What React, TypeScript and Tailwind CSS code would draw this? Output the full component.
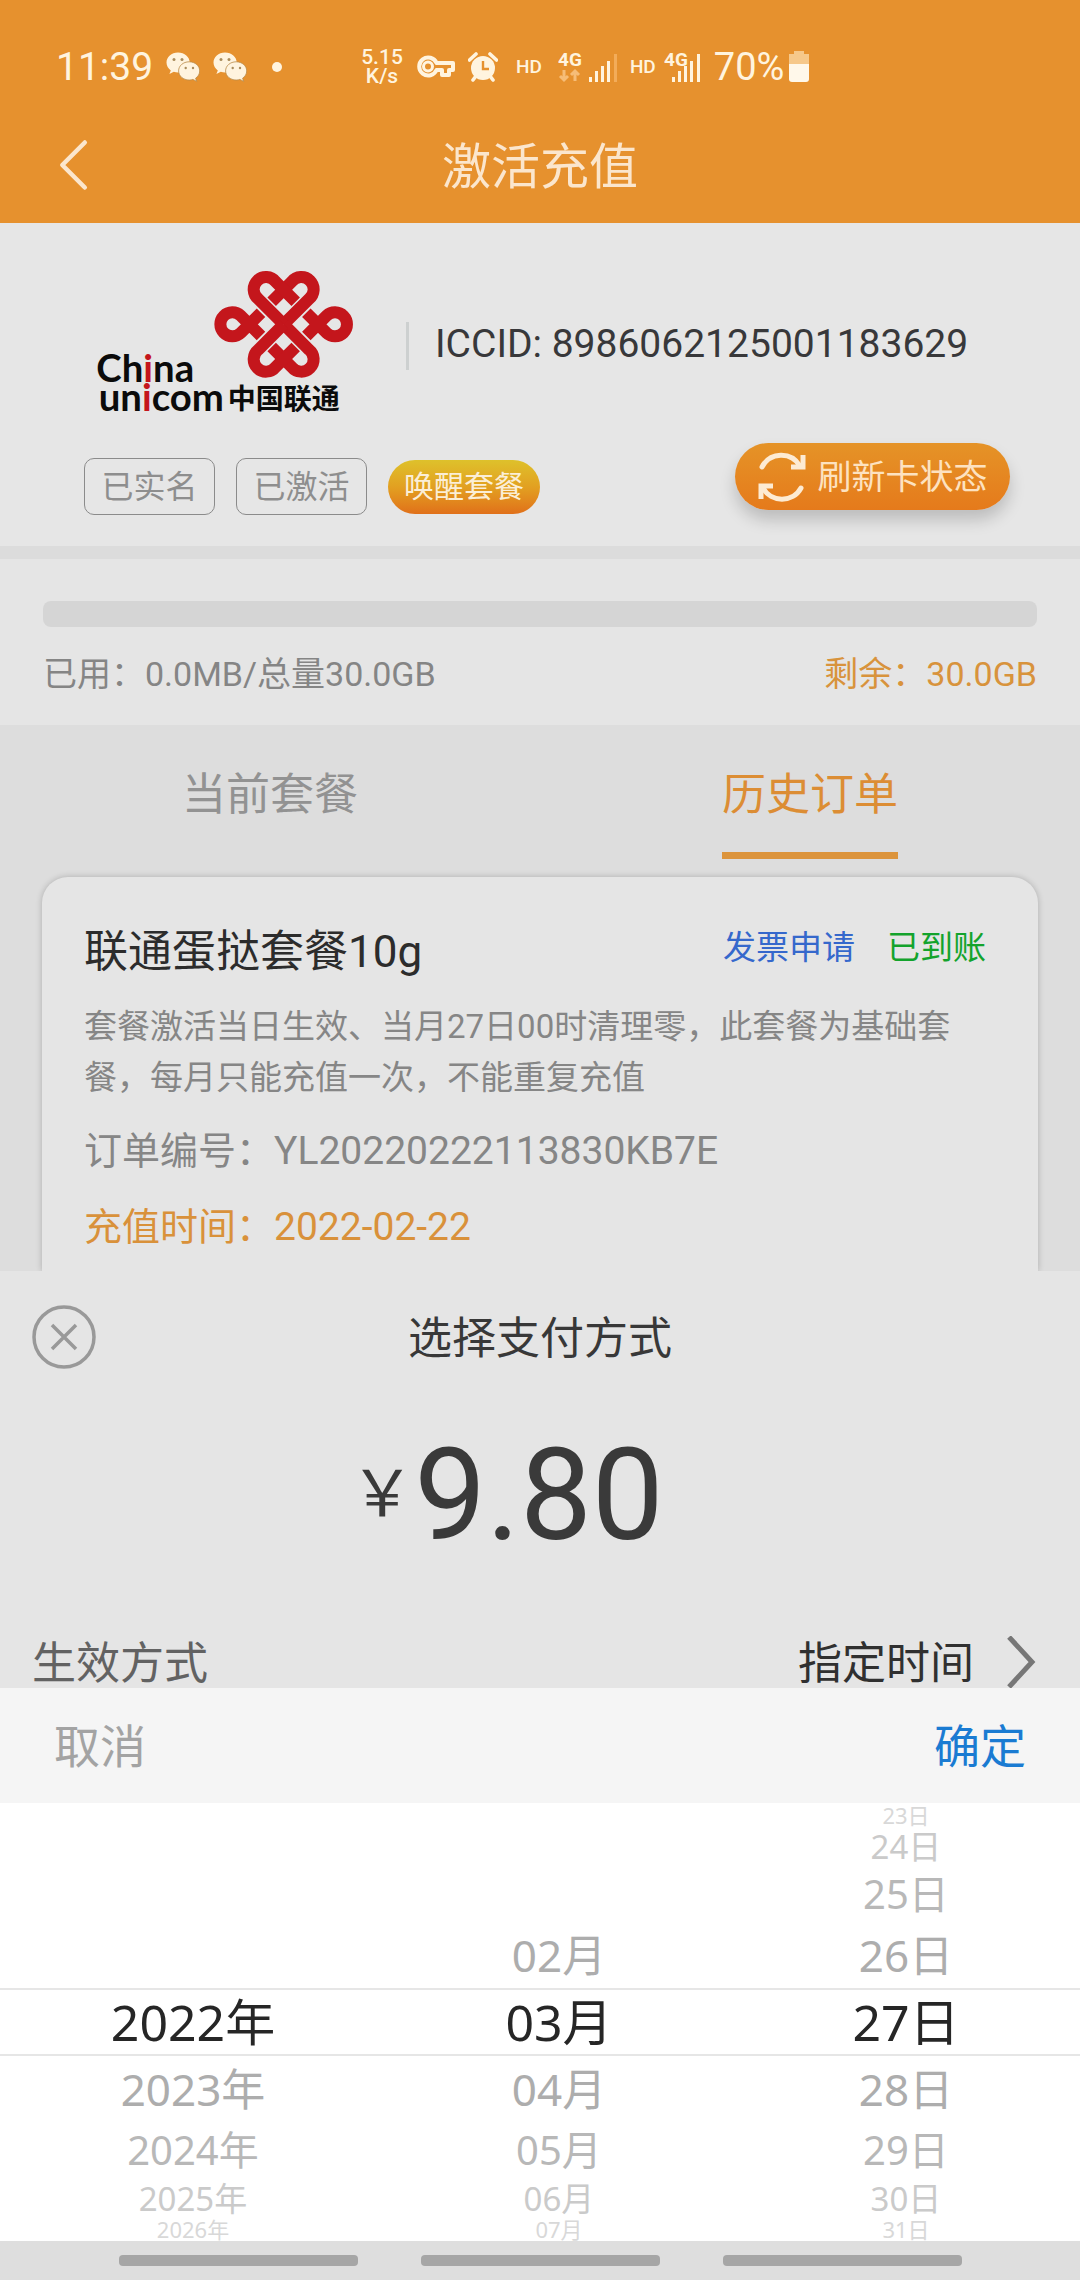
import React from "react";

const sans = "font-['Roboto','Noto_Sans_CJK_SC',sans-serif]";
const wheelFont = "font-['Noto_Sans','Noto_Sans_CJK_SC',sans-serif]";

function WeChat() {
  return (
    <svg viewBox="0 0 34 30" className="h-[30px] w-[34px]" aria-hidden="true">
      <path
        fill="#fff4df"
        d="M12 0.5C5.4 0.5 0.5 5 0.5 10.6c0 3.3 1.7 6 4.3 7.9L3.4 22l4.4-2.2c1.4.4 2.8.6 4.2.6 6.600 0 11.700-4.400 11.700-9.900S18.600 0.500 12 0.500Z"
      />
      <circle cx="8" cy="7.500" r="1.500" fill="#a98c5c" />
      <circle cx="16" cy="7.500" r="1.500" fill="#a98c5c" />
      <path
        fill="#fff4df"
        stroke="#b98a48"
        strokeWidth="0.8"
        d="M23.200 9.800c-6 0-10.600 4-10.600 9.100s4.600 9.100 10.600 9.100c1.300 0 2.600-.2 3.700-.6l3.800 2-1.100-3.200c2.600-1.700 4.100-4.300 4.100-7.300 0-5.100-4.700-9.100-10.500-9.100Z"
      />
      <circle cx="19.700" cy="16" r="1.200" fill="#a98c5c" />
      <circle cx="27" cy="16" r="1.200" fill="#a98c5c" />
    </svg>
  );
}

function KeyIcon() {
  return (
    <svg viewBox="0 0 40 24" className="h-6 w-10" aria-hidden="true">
      <path
        d="M20.500 8H37v7h-4v5h-7v-5h-5.500A9 9 0 1 1 20.500 8Z"
        fill="none"
        stroke="#fff4df"
        strokeWidth="4"
        strokeLinejoin="round"
      />
      <circle cx="12" cy="11.500" r="4.500" fill="none" stroke="#fff4df" strokeWidth="3" />
    </svg>
  );
}

function AlarmIcon() {
  return (
    <svg viewBox="0 0 30 30" className="size-[30px]" aria-hidden="true">
      <circle cx="15" cy="16" r="12" fill="#fff4df" />
      <path d="M1.500 8 8 2M28.500 8 22 2M5 28l3-4M25 28l-3-4" stroke="#fff4df" strokeWidth="3.600" strokeLinecap="round" />
      <path d="M15 9v8h6" fill="none" stroke="#e6912e" strokeWidth="2.400" />
    </svg>
  );
}

function Signal({ weak }: { weak?: boolean }) {
  const dx = weak ? 31 : 8;
  return (
    <svg
      viewBox={weak ? "0 -6 60 44" : "0 -6 38 44"}
      className={weak ? "h-11 w-[60px]" : "h-11 w-[38px]"}
      aria-hidden="true"
    >
      <text x="0" y="15" fontSize="19" fontWeight="700" fontFamily="Roboto, sans-serif" fill="#fff4df">
        4G
      </text>
      {weak && (
        <path d="M6 19v10M2 25l4 4 4-4M17 30V20M13 24l4-4 4 4" fill="none" stroke="#f6bd78" strokeWidth="3" />
      )}
      <g fill="#fff4df">
        <rect x={dx} y="26" width="3" height="5" />
        <rect x={dx + 6} y="20" width="3" height="11" />
        <rect x={dx + 12} y="15" width="3" height="16" />
        <rect x={dx + 18} y="10" width="3" height="21" />
        <rect x={dx + 25} y="3" width="3" height="28" fill={weak ? "#f3ac59" : "#fff4df"} />
      </g>
    </svg>
  );
}

function StatusBar() {
  return (
    <div className="flex h-[130px] items-center pt-1 pl-14 text-[#fff4df]">
      <span className="w-[110px] text-[39px] leading-none">11:39</span>
      <div className="flex items-center gap-[13px]">
        <WeChat />
        <WeChat />
        <span className="ml-3 size-[10px] rounded-full bg-[#fff4df]" />
      </div>
      <div className="ml-[78px] w-11 text-center text-[21px] leading-[19px] font-medium">
        5.15
        <br />
        K/s
      </div>
      <div className="ml-3 flex items-center gap-3">
        <KeyIcon />
        <AlarmIcon />
      </div>
      <span className="ml-[18px] text-[19px] font-medium">HD</span>
      <div className="ml-4 flex items-center gap-3">
        <Signal weak />
        <span className="text-[19px] font-medium">HD</span>
      </div>
      <div className="ml-2 flex items-center">
        <Signal />
      </div>
      <span className="ml-3 text-[38px] leading-none">70%</span>
      <svg viewBox="0 0 22 32" className="ml-1 h-8 w-[22px]" aria-hidden="true">
        <path d="M6 0h10v3h5v10H1V3h5Z" fill="#f6c88a" />
        <path d="M1 13h20v15a3 3 0 0 1-3 3H4a3 3 0 0 1-3-3Z" fill="#fff8ea" />
      </svg>
    </div>
  );
}

function UnicomLogo() {
  const lobe = "M733 280 809 204A37 37 0 1 0 757 152L697 212";
  const side = "M801 245 862 306A36 36 0 1 0 862 254L801 315";
  return (
    <svg viewBox="170 120 774 450" className="h-[150px] w-[258px]" role="img" aria-label="China unicom 中国联通">
      <g fill="none" stroke="#c4161c" strokeWidth="36">
        <path d={lobe} />
        <path d={lobe} transform="translate(1466 0) scale(-1 1)" />
        <path d={lobe} transform="translate(0 560) scale(1 -1)" />
        <path d={lobe} transform="translate(1466 560) scale(-1 -1)" />
        <path d={side} />
        <path d={side} transform="translate(1466 0) scale(-1 1)" />
      </g>
      <g fontFamily="Lato, sans-serif" fontWeight="700" fontSize="115" fill="#0b0b0b">
        <text x="171" y="452">
          Ch<tspan fill="#c4161c">i</tspan>na
        </text>
        <text x="178" y="540">
          un<tspan fill="#c4161c">i</tspan>com
        </text>
      </g>
      <text x="565" y="534" fontFamily="'Noto Sans CJK SC', sans-serif" fontWeight="700" fontSize="84" fill="#0b0b0b">
        中国联通
      </text>
    </svg>
  );
}

function CardInfo() {
  return (
    <section className="border-b-[13px] border-[#dcdcdc] bg-[#e6e6e6] pt-12 pr-[70px] pb-[31px] pl-[84px]">
      <div className="flex items-center pl-3">
        <UnicomLogo />
        <span className="ml-[52px] h-12 w-[3px] bg-[#cdd0d0]" />
        <p className="mb-1 ml-[26px] text-[39px] leading-none whitespace-nowrap text-[#38383a]">ICCID: 8986062125001183629</p>
      </div>
      <div className="mt-[22px] flex items-start justify-between">
        <div className="mt-[15px] flex items-center gap-[21px] leading-none">
          <span className="flex h-[57px] w-[131px] items-center justify-center rounded-[10px] border border-[#8b8b8b] text-[32px] text-[#8e8e8e]">
            已实名
          </span>
          <span className="flex h-[57px] w-[131px] items-center justify-center rounded-[10px] border border-[#8b8b8b] text-[32px] text-[#8e8e8e]">
            已激活
          </span>
          <button className="flex h-[54px] w-[152px] items-center justify-center rounded-full bg-linear-to-b from-[#dec12b] via-[#e2a021] to-[#e0701a] text-[30px] text-[#fbeed6]">
            唤醒套餐
          </button>
        </div>
        <button className="flex h-[67px] w-[275px] items-center justify-center gap-3 rounded-full bg-linear-to-b from-[#e59327] to-[#e57a1b] text-[34px] leading-none text-[#fde2c0] shadow-[0_10px_16px_rgba(0,0,0,0.18)]">
          <svg viewBox="0 0 48 50" className="h-[50px] w-12" fill="none" stroke="#fdebd3" strokeWidth="5" aria-hidden="true">
            <path d="M4 15C12 0 33 -1 42 14" strokeLinecap="round" />
            <path d="M45 3v12H33" />
            <path d="M43 36C35 51 13 51 5 36" strokeLinecap="round" />
            <path d="M3 47V34h12" />
          </svg>
          刷新卡状态
        </button>
      </div>
    </section>
  );
}

function Usage() {
  return (
    <section className="bg-[#e5e5e5] px-[43px] pt-[42px] pb-[26px]">
      <div role="progressbar" aria-label="流量" aria-valuenow={0} className="h-[26px] rounded-lg bg-[#d5d5d5]" />
      <div className="mt-[22px] flex justify-between text-[34px] leading-[50px]">
        <span className="text-[#858585]">已用：0.0MB/总量30.0GB</span>
        <span className="text-[#d8933c]">剩余：30.0GB</span>
      </div>
    </section>
  );
}

function Tabs() {
  return (
    <div role="tablist" className="grid grid-cols-2 items-start justify-items-center pt-10 text-[44px] leading-[60px]">
      <button role="tab" aria-selected="false" className="pb-[27px] text-[#929292]">
        当前套餐
      </button>
      <button role="tab" aria-selected="true" className="border-b-[7px] border-[#dc943c] pb-[27px] text-[#dc8d34]">
        历史订单
      </button>
    </div>
  );
}

function Order() {
  return (
    <article className="mx-[42px] mt-[18px] rounded-t-[26px] bg-[#e5e5e5] pt-[42px] pr-[52px] pb-4 pl-[42px] shadow-[0_0_6px_rgba(0,0,0,0.22)]">
      <div className="flex items-center justify-between leading-[66px]">
        <h2 className="text-[44px] text-[#2c2c2c]">联通蛋挞套餐10g</h2>
        <div className="flex gap-8 pb-2 text-[33px] leading-[58px]">
          <a href="#invoice" className="text-[#3568cc]">
            发票申请
          </a>
          <span className="text-[#13a32c]">已到账</span>
        </div>
      </div>
      <p className="mt-4 text-[33px] leading-[51px] text-[#868686]">
        套餐激活当日生效、当月27日00时清理零，此套餐为基础套餐，每月只能充值一次，不能重复充值
      </p>
      <p className="mt-5 text-[38px] leading-[56px] text-[#868686]">
        订单编号：<span className="text-[39px]">YL20220222113830KB7E</span>
      </p>
      <p className="mt-5 text-[38px] leading-[56px] text-[#d9913a]">
        充值时间：<span className="text-[39px]">2022-02-22</span>
      </p>
    </article>
  );
}

function PaySheet() {
  return (
    <section className="relative bg-[#e5e5e5] pr-11 pl-8">
      <div className="grid grid-cols-[64px_1fr_64px] items-center pt-8">
        <button aria-label="关闭">
          <svg viewBox="0 0 64 64" className="size-16" fill="none" stroke="#999" strokeWidth="3.500">
            <circle cx="32" cy="32" r="30" />
            <path d="M20 20 44 44M44 20 20 44" />
          </svg>
        </button>
        <h2 className="pt-1 pl-3 text-center text-[44px] leading-[64px] text-[#383838]">选择支付方式</h2>
      </div>
      <div className="mt-14 flex items-start justify-center pr-[54px] text-[#3a3a3a]">
        <span className="mt-8 text-[64px] leading-[72px]">￥</span>
        <span className="text-[128px] leading-[136px]">9.80</span>
      </div>
      <div className="mt-[73px] flex items-end text-[44px] leading-[48px]">
        <span className="flex-1 text-[#626262]">生效方式</span>
        <button className="flex items-end gap-8 text-[#303030]">
          指定时间
          <svg viewBox="0 0 30 52" className="h-[52px] w-[30px]" fill="none" stroke="#777" strokeWidth="5" aria-hidden="true">
            <path d="M3 1 26 26 3 51" />
          </svg>
        </button>
      </div>
    </section>
  );
}

const rowStyle = [
  "h-[68px] text-[50px] text-[#262626]",
  "h-[66px] text-[44px] text-[#adadad]",
  "h-14 text-[40px] text-[#b8b8b8]",
  "h-10 text-[33px] text-[#cacaca]",
  "h-[22px] text-[22px] text-[#d8d8d8]",
];

const wheels = [
  ["", "", "", "", "2022年", "2023年", "2024年", "2025年", "2026年"],
  ["", "", "", "02月", "03月", "04月", "05月", "06月", "07月"],
  ["23日", "24日", "25日", "26日", "27日", "28日", "29日", "30日", "31日"],
];

function DatePicker() {
  return (
    <section>
      <div className="flex h-[115px] items-center justify-between bg-[#f5f5f5] px-[54px] pt-1 text-[46px]">
        <button className="text-[#a3a3a3]">取消</button>
        <button className="text-[#1a7bd2]">确定</button>
      </div>
      <div className={`grid grid-cols-[386fr_346fr_348fr] bg-white py-px ${wheelFont}`}>
        {wheels.map((items, c) => (
          <ul key={c} role="listbox" aria-label={["年", "月", "日"][c]}>
            {items.map((item, i) => (
              <li
                key={i}
                role="option"
                aria-selected={i === 4}
                className={`flex items-center justify-center leading-none ${rowStyle[Math.abs(i - 4)]} ${
                  i === 4 ? "border-y-2 border-[#e6e6e6]" : ""
                }`}
              >
                {item}
              </li>
            ))}
          </ul>
        ))}
      </div>
    </section>
  );
}

export default function App() {
  return (
    <div className={`flex min-h-screen flex-col bg-[#dddddd] ${sans}`}>
      <header className="bg-[#e6912e]">
        <StatusBar />
        <div className="grid h-[93px] grid-cols-[96px_1fr_96px] items-start">
          <button aria-label="返回" className="justify-self-end pr-1">
            <svg viewBox="0 0 36 60" className="h-[62px] w-9 pt-2" fill="none" stroke="#fbe6cd" strokeWidth="5" strokeLinecap="round" strokeLinejoin="round">
              <path d="M30 5 5 30 30 55" />
            </svg>
          </button>
          <h1 className="text-center text-[49px] leading-[76px] text-[#fbe6cd]">激活充值</h1>
        </div>
      </header>
      <main>
        <CardInfo />
        <Usage />
        <Tabs />
        <Order />
      </main>
      <PaySheet />
      <DatePicker />
      <nav className="flex flex-1 items-start justify-center gap-[63px] bg-[#dedede] pt-[14px]">
        <button aria-label="最近任务" className="h-[11px] w-[239px] rounded bg-[#a6a6a6]" />
        <button aria-label="主页" className="h-[11px] w-[239px] rounded bg-[#a6a6a6]" />
        <button aria-label="后退" className="h-[11px] w-[239px] rounded bg-[#a6a6a6]" />
      </nav>
    </div>
  );
}
